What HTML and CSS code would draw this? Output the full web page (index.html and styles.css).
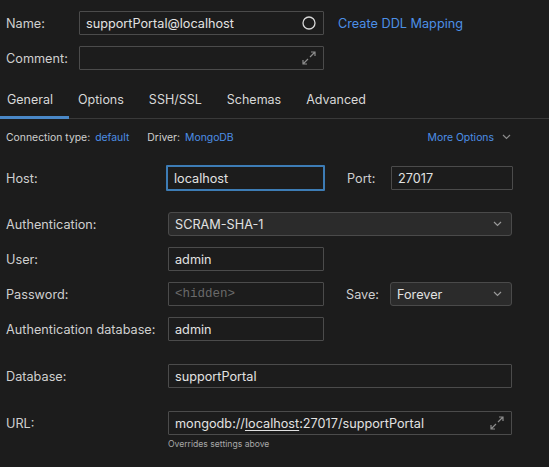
FILE: index.html
```html
<!DOCTYPE html>
<html>
<head>
<meta charset="utf-8">
<link rel="stylesheet" href="styles.css">
</head>
<body>
<div class="page">
  <div class="head">
    <div class="row r-name">
      <span class="lbl w-head">Name:</span>
      <div class="field w-head-in">
        <span class="val">supportPortal@localhost</span>
        <svg class="ico" width="14" height="14" viewBox="0 0 14 14"><circle cx="7" cy="7" r="6" fill="none" stroke="#d8d8d8" stroke-width="1.3"/></svg>
      </div>
      <span class="link ddl">Create DDL Mapping</span>
    </div>
    <div class="row r-comment">
      <span class="lbl w-head">Comment:</span>
      <div class="field w-head-in">
        <span class="val"></span>
        <svg class="ico" width="14" height="14" viewBox="0 0 14 14" fill="none" stroke="#8c8c8c" stroke-width="1.2"><path d="M8 6L13 1M9 1H13V5M6 8L1 13M1 9V13H5"/></svg>
      </div>
    </div>
  </div>

  <div class="tabs">
    <span class="tab active">General</span>
    <span class="tab">Options</span>
    <span class="tab">SSH/SSL</span>
    <span class="tab">Schemas</span>
    <span class="tab">Advanced</span>
  </div>

  <div class="meta">
    <span class="mlbl">Connection type:</span><span class="link">default</span>
    <span class="mlbl drv">Driver:</span><span class="link">MongoDB</span>
    <span class="more link">More Options
      <svg width="9" height="6" viewBox="0 0 9 6" fill="none" stroke="#8c8c8c" stroke-width="1.2"><path d="M1 1L4.5 4.5L8 1"/></svg>
    </span>
  </div>

  <div class="form">
    <div class="row r-host">
      <span class="lbl w-lab">Host:</span>
      <div class="field w-mid focus"><span class="val">localhost</span></div>
      <span class="lbl w-sub">Port:</span>
      <div class="field w-small"><span class="val">27017</span></div>
    </div>
    <div class="row r-auth">
      <span class="lbl w-lab">Authentication:</span>
      <div class="field select w-full"><span class="val">SCRAM-SHA-1</span>
        <svg class="chev" width="9" height="6" viewBox="0 0 9 6" fill="none" stroke="#9a9a9a" stroke-width="1.2"><path d="M1 1L4.5 4.5L8 1"/></svg>
      </div>
    </div>
    <div class="row r-tight">
      <span class="lbl w-lab">User:</span>
      <div class="field w-mid"><span class="val">admin</span></div>
    </div>
    <div class="row r-tight">
      <span class="lbl w-lab">Password:</span>
      <div class="field w-mid"><span class="val ph">&lt;hidden&gt;</span></div>
      <span class="lbl w-sub">Save:</span>
      <div class="field select w-small"><span class="val">Forever</span>
        <svg class="chev" width="9" height="6" viewBox="0 0 9 6" fill="none" stroke="#9a9a9a" stroke-width="1.2"><path d="M1 1L4.5 4.5L8 1"/></svg>
      </div>
    </div>
    <div class="row r-tight">
      <span class="lbl w-lab">Authentication database:</span>
      <div class="field w-mid"><span class="val">admin</span></div>
    </div>
    <div class="row r-wide">
      <span class="lbl w-lab">Database:</span>
      <div class="field w-full"><span class="val">supportPortal</span></div>
    </div>
    <div class="row r-wide">
      <span class="lbl w-lab">URL:</span>
      <div class="field w-full"><span class="val">mongodb://<u>localhost</u>:27017/supportPortal</span>
        <svg class="ico" width="14" height="14" viewBox="0 0 14 14" fill="none" stroke="#8c8c8c" stroke-width="1.2"><path d="M8 6L13 1M9 1H13V5M6 8L1 13M1 9V13H5"/></svg>
      </div>
    </div>
    <div class="hint">Overrides settings above</div>
  </div>
</div>
</body>
</html>
```

FILE: styles.css
```css
* { box-sizing: border-box; }
html, body { margin: 0; padding: 0; background: #1c1c1c; }
body {
  font-family: Inter, "Noto Sans", sans-serif;
  font-size: 12.7px;
  color: #d4d4d4;
  width: 549px;
  height: 467px;
  overflow: hidden;
}
.page { padding: 11px 0 0 0; }
.head { padding-left: 6px; }
.row { display: flex; align-items: center; height: 24px; }
.r-comment { margin-top: 11px; }
.lbl { color: #cfcfcf; white-space: nowrap; }
.w-head { width: 73px; }
.w-head-in { width: 245px; }
.field {
  display: flex;
  align-items: center;
  height: 24px;
  border: 1px solid #4b4b4b;
  border-radius: 1px;
  padding: 0 6px 0 6px;
  background: #1c1c1c;
}
.val { flex: 1; color: #e2e2e2; white-space: nowrap; }
.ico { flex: none; margin-right: 1px; }
.link { color: #4c8fe6; }
.ddl { margin-left: 14px; }

.tabs {
  display: flex;
  margin-top: 13px;
  border-bottom: 1px solid #393939;
  height: 36px;
  align-items: stretch;
  font-size: 12.5px;
}
.tab {
  display: flex;
  align-items: center;
  padding: 0 16px 3px 9px;
  color: #d8d8d8;
  position: relative;
}
.tab:first-child { padding-left: 7px; }
.tab.active::after {
  content: "";
  position: absolute;
  left: 0; right: 0; bottom: -1px;
  height: 3px;
  background: #4a88c7;
}

.meta {
  display: flex;
  align-items: center;
  height: 20px;
  margin-top: 8px;
  padding: 0 38px 0 6px;
  font-size: 10.4px;
}
.mlbl { color: #cfcfcf; margin-right: 5px; }
.drv { margin-left: 18px; }
.more { margin-left: auto; display: flex; align-items: center; gap: 8px; }

.form { padding: 18px 0 0 6px; }
.w-lab { width: 162px; }
.w-mid { width: 156px; }
.w-sub { width: 44px; margin-left: 22px; }
.w-small { width: 122px; }
.w-full { width: 344px; }
.r-auth { margin-top: 21px; }
.r-tight { margin-top: 11px; }
.r-wide { margin-top: 23px; }
.focus { border: 2px solid #3d7cb5; margin-left: -2px; width: 159px; height: 26px; padding-left: 6px; }
.r-host { height: 26px; }
.select { background: #2b2b2b; border-color: #4a4a4a; border-radius: 3px; padding-right: 9px; }
.chev { flex: none; }
.ph { font-family: "Liberation Mono", "DejaVu Sans Mono", monospace; font-size: 12.5px; color: #6a6a6a; }
u { text-decoration-thickness: 1px; text-underline-offset: 2px; }
.hint { margin: 4px 0 0 162px; font-size: 8.6px; color: #a8a8a8; }
```
